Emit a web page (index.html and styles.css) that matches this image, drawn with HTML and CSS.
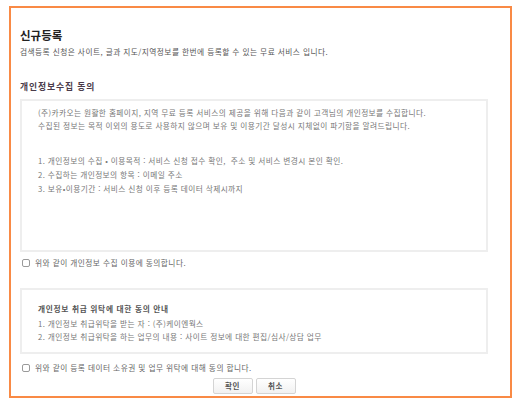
FILE: index.html
```html
<!DOCTYPE html>
<html lang="ko">
<head>
<meta charset="utf-8">
<title>신규등록</title>
<link rel="stylesheet" href="styles.css">
</head>
<body>
<div class="frame">
  <h1 class="title">신규등록</h1>
  <p class="subtitle">검색등록 신청은 사이트, 글과 지도/지역정보를 한번에 등록할 수 있는 무료 서비스 입니다.</p>
  <h2 class="section">개인정보수집 동의</h2>
  <div class="box box-terms">
    <p class="intro">(주)카카오는 원활한 홈페이지, 지역 무료 등록 서비스의 제공을 위해 다음과 같이 고객님의 개인정보를 수집합니다.<br>수집된 정보는 목적 이외의 용도로 사용하지 않으며 보유 및 이용기간 달성시 지체없이 파기함을 알려드립니다.</p>
    <ul class="list">
      <li>1. 개인정보의 수집 • 이용목적 : 서비스 신청 접수 확인,&nbsp;&nbsp;주소 및 서비스 변경시 본인 확인.</li>
      <li>2. 수집하는 개인정보의 항목 : 이메일 주소</li>
      <li>3. 보유•이용기간 : 서비스 신청 이후 등록 데이터 삭제시까지</li>
    </ul>
  </div>
  <label class="agree agree-1"><span class="check"></span>위와 같이 개인정보 수집 이용에 동의합니다.</label>
  <div class="box box-trust">
    <p class="trust-title">개인정보 취급 위탁에 대한 동의 안내</p>
    <p class="trust-line">1. 개인정보 취급위탁을 받는 자 : (주)케이엔웍스</p>
    <p class="trust-line">2. 개인정보 취급위탁을 하는 업무의 내용 : 사이트 정보에 대한 편집/심사/상담 업무</p>
  </div>
  <label class="agree agree-2"><span class="check"></span>위와 같이 등록 데이터 소유권 및 업무 위탁에 대해 동의 합니다.</label>
  <div class="buttons">
    <button class="btn">확인</button>
    <button class="btn">취소</button>
  </div>
</div>
</body>
</html>
```
FILE: styles.css
```css
* { box-sizing: border-box; }
html, body { margin: 0; padding: 0; background: #fff; }
body { font-family: "Noto Sans CJK KR", "Noto Sans", sans-serif; color: #666; }

.frame {
  margin: 6px 0 0 9px;
  width: 503px;
  height: 392px;
  border: 2px solid #f98a45;
  padding: 20px 22px 0 9px;
}

.title {
  margin: 0;
  font-size: 11.5px;
  line-height: 14px;
  font-weight: 700;
  color: #222;
}

.subtitle {
  margin: 5px 0 0;
  font-size: 7.7px;
  line-height: 10px;
  color: #555;
  letter-spacing: 0.45px;
}

.section {
  margin: 24px 0 0;
  font-size: 8.8px;
  line-height: 12px;
  font-weight: 700;
  color: #4a3b4a;
  letter-spacing: 0.9px;
}

.box {
  border: 2px solid #eeeeee;
  width: 468px;
  padding-left: 16px;
  font-size: 7.7px;
  color: #777;
  letter-spacing: 0.4px;
}

.box-terms {
  margin-top: 6px;
  height: 153px;
  padding-top: 6px;
}

.intro {
  margin: 0;
  line-height: 12.5px;
}

.list {
  list-style: none;
  margin: 22px 0 0;
  padding: 0;
  line-height: 14px;
}

.agree {
  display: flex;
  align-items: center;
  gap: 5px;
  padding-left: 2px;
  font-size: 7.7px;
  line-height: 12px;
  color: #666;
  letter-spacing: 0.45px;
}

.agree-1 { margin-top: 5px; }
.agree-2 { margin-top: 8px; }

.check {
  width: 8px;
  height: 8px;
  border: 1px solid #9a9a9a;
  border-radius: 2px;
  background: #fff;
  flex: none;
}

.box-trust {
  margin-top: 19px;
  height: 66px;
  padding-top: 12px;
}

.trust-title {
  margin: 0 0 2px;
  font-weight: 700;
  line-height: 13px;
  color: #555;
  letter-spacing: 0.7px;
}

.trust-line {
  margin: 0;
  line-height: 13px;
}

.buttons {
  width: 468px;
  display: flex;
  justify-content: center;
  gap: 3px;
  margin-top: 4px;
}

.btn {
  width: 40px;
  height: 16px;
  padding: 0;
  border: 1px solid #d4d4d4;
  border-radius: 2px;
  background: linear-gradient(#ffffff, #f1f1f1);
  font-family: inherit;
  font-size: 7.5px;
  font-weight: 700;
  color: #555;
  line-height: 14px;
  letter-spacing: 0.5px;
}
```
